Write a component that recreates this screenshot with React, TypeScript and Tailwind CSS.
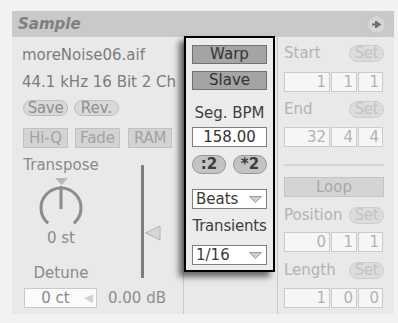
import React from 'react';

const font = { fontFamily: '"DejaVu Sans", "Liberation Sans", sans-serif' };

function Pill({ label, className = '' }: { label: string; className?: string }) {
  return (
    <div
      className={`flex items-center justify-center rounded-full border text-[15px] leading-none ${className}`}
    >
      {label}
    </div>
  );
}

function NumBox({ value, w }: { value: string; w: string }) {
  return (
    <div
      className={`${w} h-[20px] flex items-center justify-end pr-[3px] bg-[#f6f6f6] border border-[#cbcbcb] text-[15px] text-[#b2b2b2] leading-none`}
    >
      {value}
    </div>
  );
}

function BoxRow({ values, mt }: { values: string[]; mt: string }) {
  return (
    <div className={`flex gap-[1px] ${mt}`}>
      <NumBox value={values[0]} w="w-[46px]" />
      <NumBox value={values[1]} w="w-[26px]" />
      <NumBox value={values[2]} w="w-[25px]" />
    </div>
  );
}

function SetRow({ label, mt }: { label: string; mt: string }) {
  return (
    <div className={`flex items-center justify-between h-[17px] ${mt}`}>
      <span className="text-[15px] text-[#b3b3b3] leading-none">{label}</span>
      <Pill label="Set" className="w-[35px] h-[17px] bg-[#dcdcdc] border-[#cdcdcd] text-[#c3c3c3] tracking-[-0.3px]" />
    </div>
  );
}

function DownTri() {
  return (
    <svg width="13" height="7" viewBox="0 0 13 7">
      <polygon points="0.5,0.5 12.5,0.5 6.5,6.5" fill="#cfcfcf" stroke="#9c9c9c" strokeWidth="1" />
    </svg>
  );
}

function Dropdown({ label, mt }: { label: string; mt: string }) {
  return (
    <div
      className={`h-[20px] flex items-center justify-between pl-[3px] pr-[4px] bg-white border border-[#7e7e7e] text-[15px] text-[#3a3a3a] leading-none ${mt}`}
    >
      <span>{label}</span>
      <DownTri />
    </div>
  );
}

export default function App() {
  return (
    <div className="w-[398px] h-[323px] bg-[#f2f2f2] pt-[11px] pl-[12px]" style={font}>
      <div className="w-[382px] h-[303px] flex flex-col">
        {/* header */}
        <div className="h-[26px] bg-[#c9c9c9] flex items-center justify-between pl-[6px] pr-[8px]">
          <span className="text-[15px] font-bold italic text-[#7f7f7f] leading-none">Sample</span>
          <div className="w-[19px] h-[19px] rounded-full bg-[#d6d6d6] border border-[#c2c2c2] flex items-center justify-center">
            <svg width="11" height="11" viewBox="0 0 11 11">
              <line x1="1" y1="5.5" x2="7" y2="5.5" stroke="#707070" strokeWidth="2" />
              <line x1="5" y1="2" x2="5" y2="9" stroke="#707070" strokeWidth="2" />
              <polygon points="6,2.5 10.5,5.5 6,8.5" fill="#707070" />
            </svg>
          </div>
        </div>

        {/* body */}
        <div className="flex-1 flex bg-[#e9e9e9]">
          {/* left column */}
          <div className="w-[171px] pl-[10px] flex flex-col text-[#7c7c7c] overflow-hidden">
            <div className="mt-[9px] h-[18px] leading-[18px] text-[15px] whitespace-nowrap">moreNoise06.aif</div>
            <div className="mt-[9px] h-[18px] leading-[18px] text-[15px] whitespace-nowrap">44.1 kHz 16 Bit 2 Ch</div>
            <div className="mt-[9px] flex gap-[6px] pl-[1px]">
              <Pill label="Save" className="w-[45px] h-[16px] bg-[#d9d9d9] border-[#bfbfbf] text-[#8e8e8e] tracking-[-0.3px]" />
              <Pill label="Rev." className="w-[45px] h-[16px] bg-[#d9d9d9] border-[#bfbfbf] text-[#8e8e8e]" />
            </div>
            <div className="mt-[12px] flex pl-[1px] text-[15px] text-[#a2a2a2] leading-none">
              <div className="w-[45px] h-[20px] flex items-center justify-center bg-[#d3d3d3] border border-[#c2c2c2]">Hi-Q</div>
              <div className="ml-[7px] w-[45px] h-[20px] flex items-center justify-center bg-[#d3d3d3] border border-[#c2c2c2]">Fade</div>
              <div className="ml-[8px] w-[44px] h-[20px] flex items-center justify-center bg-[#d3d3d3] border border-[#c2c2c2] tracking-[-0.3px]">RAM</div>
            </div>

            <div className="flex">
              {/* transpose knob */}
              <div className="w-[78px] flex flex-col items-center">
                <div className="mt-[8px] h-[18px] leading-[18px] text-[15px] text-[#8a8a8a]">Transpose</div>
                <svg className="mt-[4px]" width="13" height="7" viewBox="0 0 13 7">
                  <polygon points="0,0 13,0 6.5,7" fill="#b8b8b8" />
                </svg>
                <svg width="46" height="46" viewBox="0 0 46 46">
                  <path d="M 10.14 38.32 A 20 20 0 1 1 35.86 38.32" fill="none" stroke="#8c8c8c" strokeWidth="3" />
                  <line x1="23" y1="1" x2="23" y2="24" stroke="#8c8c8c" strokeWidth="3" />
                </svg>
                <div className="-mt-[1px] h-[16px] leading-[16px] text-[15px] text-[#8a8a8a]">0 st</div>
                <div className="mt-[18px] h-[18px] leading-[18px] text-[15px] text-[#8a8a8a]">Detune</div>
              </div>
              {/* volume fader */}
              <div className="ml-[41px] mt-[17px] flex items-start">
                <div className="w-[3px] h-[113px] bg-[#7e7e7e]" />
                <svg className="mt-[60px]" width="17" height="16" viewBox="0 0 17 16">
                  <polygon points="1.5,8 16,1 16,15" fill="#d6d6d6" stroke="#b4b4b4" strokeWidth="1" />
                </svg>
              </div>
            </div>

            <div className="mt-[6px] flex items-center">
              <div className="ml-[2px] w-[73px] h-[20px] flex items-center bg-[#fbfbfb] border border-[#c9c9c9]">
                <span className="flex-1 text-center text-[15px] text-[#8a8a8a] leading-none pl-[2px]">0 ct</span>
                <svg className="mr-[3px]" width="9" height="9" viewBox="0 0 9 9">
                  <polygon points="0,4.5 9,0 9,9" fill="#d2d2d2" />
                </svg>
              </div>
              <span className="ml-[11px] text-[15px] text-[#8e8e8e] leading-none">0.00 dB</span>
            </div>
          </div>

          {/* center column */}
          <div className="w-[95px] border-l border-r border-[#cacaca] relative z-10">
            <div className="-mt-[1px] w-[91px] h-[236px] border-2 border-black bg-[#ececec] shadow-[-5px_5px_6px_rgba(0,0,0,0.55)] px-[6px] flex flex-col">
              <div className="mt-[7px] h-[19px] flex items-center justify-center bg-[#a4a4a4] border border-[#727272] text-[15px] text-[#333] leading-none">Warp</div>
              <div className="mt-[7px] h-[19px] flex items-center justify-center bg-[#a4a4a4] border border-[#727272] text-[15px] text-[#333] leading-none">Slave</div>
              <div className="mt-[14px] h-[18px] leading-[18px] text-center text-[15px] text-[#404040] whitespace-nowrap">Seg. BPM</div>
              <div className="mt-[5px] h-[20px] flex items-center justify-center bg-white border border-[#7e7e7e] text-[15px] text-[#333] leading-none">158.00</div>
              <div className="mt-[8px] flex justify-between">
                <Pill label=":2" className="w-[34px] h-[19px] bg-[#c3c3c3] border-[#979797] text-[#3c3c3c] font-bold" />
                <Pill label="*2" className="w-[34px] h-[19px] bg-[#c3c3c3] border-[#979797] text-[#3c3c3c] font-bold" />
              </div>
              <Dropdown label="Beats" mt="mt-[15px]" />
              <div className="mt-[8px] h-[18px] leading-[18px] text-center text-[15px] text-[#404040] whitespace-nowrap tracking-[-0.2px]">Transients</div>
              <Dropdown label="1/16" mt="mt-[10px]" />
            </div>
          </div>

          {/* right column */}
          <div className="flex-1 pl-[6px] pr-[10px] flex flex-col">
            <SetRow label="Start" mt="mt-[8px]" />
            <BoxRow values={['1', '1', '1']} mt="mt-[10px]" />
            <SetRow label="End" mt="mt-[9px]" />
            <BoxRow values={['32', '4', '4']} mt="mt-[9px]" />
            <div className="mt-[17px] h-[2px] bg-[#d3d3d3]" />
            <div className="mt-[11px] h-[20px] flex items-center justify-center bg-[#d4d4d4] border border-[#c4c4c4] text-[15px] text-[#a9a9a9] leading-none">Loop</div>
            <SetRow label="Position" mt="mt-[10px]" />
            <BoxRow values={['0', '1', '1']} mt="mt-[8px]" />
            <SetRow label="Length" mt="mt-[10px]" />
            <BoxRow values={['1', '0', '0']} mt="mt-[9px]" />
          </div>
        </div>
      </div>
    </div>
  );
}
